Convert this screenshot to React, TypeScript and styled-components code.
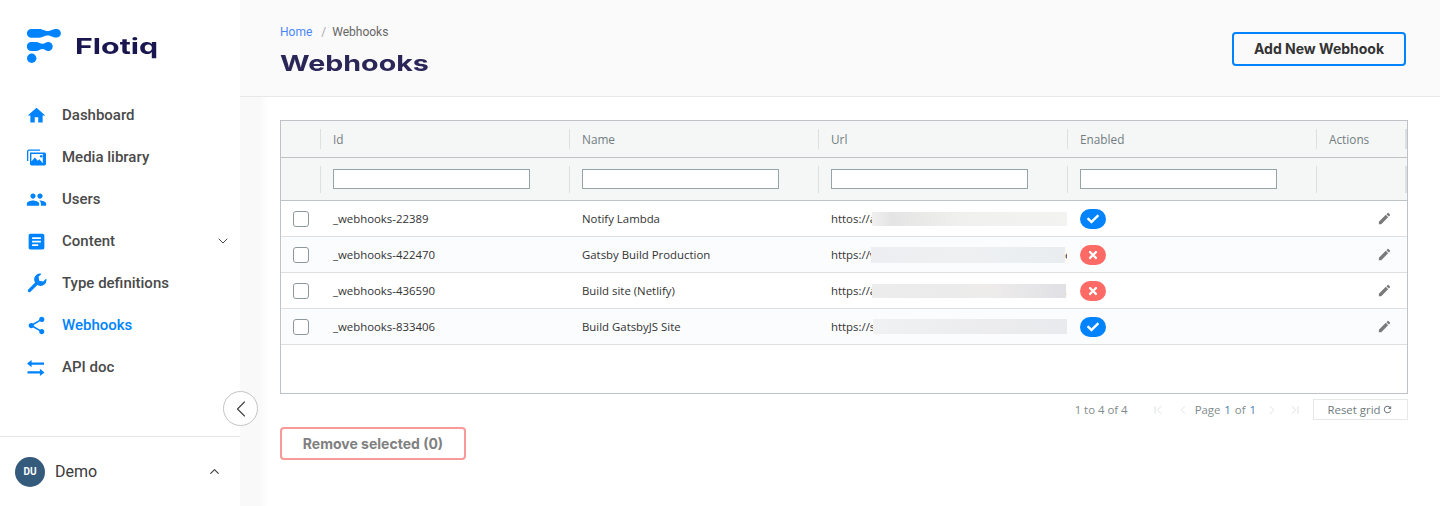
import React from "react";
import styled, { createGlobalStyle } from "styled-components";
import { MdHome, MdPeople, MdArticle, MdShare, MdEdit, MdRefresh } from "react-icons/md";
import { FaCheck, FaTimes } from "react-icons/fa";
import { ChevronDown, ChevronUp, ChevronLeft, ChevronRight, ChevronFirst, ChevronLast } from "lucide-react";

const Global = createGlobalStyle`
  html, body { margin: 0; padding: 0; background: #fff; }
  body { font-family: "Roboto", "Liberation Sans", sans-serif; overflow: hidden; }
  * { box-sizing: border-box; }
`;

const Page = styled.div`
  display: flex;
  width: 1440px;
  height: 506px;
  overflow: hidden;
`;

const Sidebar = styled.aside`
  position: relative;
  width: 240px;
  flex: none;
  display: flex;
  flex-direction: column;
  background: #fff;
`;

const LogoRow = styled.div`
  display: flex;
  align-items: flex-start;
  height: 94px;
  padding: 29px 0 0 27px;
`;

const LogoText = styled.span`
  display: block;
  margin: 4px 0 0 14px;
  font-family: "Inter", sans-serif;
  font-weight: 700;
  font-size: 22px;
  line-height: 27px;
  color: #1a1650;
  transform: scaleX(1.38);
  transform-origin: left center;
`;

const Nav = styled.nav`
  display: flex;
  flex-direction: column;
  flex: 1;
`;

const NavItem = styled.a<{ $active?: boolean }>`
  display: flex;
  align-items: center;
  height: 42px;
  padding-left: 26px;
  font-size: 15px;
  font-weight: 500;
  color: ${(p) => (p.$active ? "#0083fc" : "#4a4a4a")};
  position: relative;
`;

const NavIcon = styled.span`
  display: flex;
  width: 36px;
  color: #0083fc;
  font-size: 21px;
`;

const Caret = styled.span`
  margin-left: auto;
  margin-right: 9px;
  display: flex;
  color: #444;
`;

const Footer = styled.div`
  display: flex;
  align-items: center;
  height: 70px;
  border-top: 1px solid #e6e6e6;
  padding: 0 18px 0 15px;
  font-size: 16px;
  color: #3a3a3a;
`;

const Avatar = styled.span`
  width: 30px;
  height: 30px;
  border-radius: 50%;
  background: #345a7c;
  color: #fff;
  font-size: 10px;
  font-weight: 700;
  display: flex;
  align-items: center;
  justify-content: center;
  margin-right: 10px;
`;

const Collapse = styled.button`
  position: absolute;
  left: 223px;
  top: 391px;
  width: 35px;
  height: 35px;
  border-radius: 50%;
  border: 1px solid #c4c4c4;
  background: #fff;
  padding: 0;
  display: flex;
  align-items: center;
  justify-content: center;
  color: #444;
  z-index: 2;
`;

const Main = styled.main`
  flex: 1;
  display: flex;
  flex-direction: column;
  background: linear-gradient(90deg, #f9f9f9 0, #f9f9f9 20px, #fff 28px);
`;

const Header = styled.header`
  display: flex;
  justify-content: space-between;
  height: 97px;
  padding: 25px 34px 0 40px;
  background: #fafafa;
  border-bottom: 1px solid #e8e8e8;
`;

const Crumbs = styled.div`
  display: flex;
  font-size: 12px;
  line-height: 14px;
  color: #666;
`;

const CrumbLink = styled.span`
  color: #4a86f7;
`;

const CrumbSep = styled.span`
  color: #aaa;
  margin: 0 6px 0 9px;
`;

const Title = styled.h1`
  margin: 9px 0 0;
  font-family: "Inter", sans-serif;
  font-weight: 700;
  font-size: 22px;
  line-height: 30px;
  color: #2a2758;
  transform: scaleX(1.3);
  transform-origin: left center;
`;

const AddButton = styled.button`
  margin-top: 7px;
  width: 174px;
  height: 34px;
  border: 2px solid #0083fc;
  border-radius: 4px;
  background: transparent;
  color: #333;
  font-family: "Inter", sans-serif;
  font-size: 14px;
  font-weight: 700;
  padding: 0 0 2px;
`;

const Content = styled.div`
  padding: 23px 32px 0 40px;
`;

const Grid = styled.div`
  height: 274px;
  border: 1px solid #bdc3c7;
  font-family: "Open Sans", sans-serif;
  font-size: 11.4px;
`;

const Row = styled.div<{ $h: number; $bg: string; $line: string }>`
  display: grid;
  grid-template-columns: 39px 249px 249px 249px 249px 91px;
  align-items: center;
  height: ${(p) => p.$h}px;
  background: ${(p) => p.$bg};
  border-bottom: 1px solid ${(p) => p.$line};
`;

const HeadCell = styled.div<{ $h: number; $end?: boolean }>`
  display: flex;
  align-items: center;
  height: ${(p) => p.$h}px;
  padding: 0 0 1px 12px;
  border-left: 1px solid #dde0e1;
  border-right: ${(p) => (p.$end ? "2px solid #dde0e1" : "none")};
  color: #727d7f;
  font-size: 11.8px;
  font-weight: 500;
`;

const Blank = styled.div``;

const FilterInput = styled.input`
  width: 197px;
  height: 20px;
  border: 1px solid #95a5a6;
  background: #fff;
  padding: 0;
`;

const CheckCell = styled.div`
  display: flex;
  padding-left: 12px;
`;

const Check = styled.span`
  width: 16px;
  height: 16px;
  border: 1px solid #8d989c;
  border-radius: 3px;
  background: #fff;
`;

const Cell = styled.div`
  padding-left: 13px;
  color: #333;
  white-space: nowrap;
  overflow: hidden;
  display: flex;
  align-items: center;
`;

const UrlText = styled.span<{ $w: number }>`
  display: block;
  width: ${(p) => p.$w}px;
  overflow: hidden;
  flex: none;
`;

const Blur = styled.span<{ $w: number; $h: number; $tone: string }>`
  display: block;
  flex: none;
  width: ${(p) => p.$w}px;
  height: ${(p) => p.$h}px;
  background: ${(p) => p.$tone};
  filter: blur(0.5px);
`;

const Tail = styled.span`
  width: 3px;
  overflow: hidden;
  line-height: 1;
  color: #333;
`;

const Pill = styled.span<{ $on: boolean }>`
  width: 26px;
  height: 20px;
  border-radius: 10px;
  background: ${(p) => (p.$on ? "#0083fc" : "#fe6a65")};
  color: #fff;
  display: flex;
  align-items: center;
  justify-content: center;
  font-size: 12px;
`;

const ActionCell = styled.div`
  display: flex;
  justify-content: flex-end;
  padding-right: 15px;
  color: #7a7a7a;
  font-size: 15px;
`;

const Pager = styled.div`
  display: flex;
  align-items: center;
  height: 21px;
  margin-top: 5px;
  font-family: "Open Sans", sans-serif;
  font-size: 11.4px;
  color: #7f8c8d;
`;

const Count = styled.span`
  margin-left: auto;
  margin-right: 20px;
`;

const PageIcon = styled.span<{ $mr: number }>`
  display: flex;
  width: 20px;
  margin-right: ${(p) => p.$mr}px;
  justify-content: center;
  color: #d0d5d6;
`;

const PageLabel = styled.span`
  margin-right: 6px;
  word-spacing: 1px;
`;

const PageNum = styled.span`
  color: #4b7fb5;
`;

const ResetButton = styled.button`
  margin-left: 8px;
  width: 95px;
  height: 21px;
  border: 1px solid #e6e8e8;
  background: #fff;
  color: #6f7b7d;
  font-family: "Open Sans", sans-serif;
  font-size: 11.4px;
  padding: 0;
  display: flex;
  align-items: center;
  justify-content: center;
  gap: 2px;
`;

const RemoveButton = styled.button`
  display: block;
  margin-top: 7px;
  width: 186px;
  height: 33px;
  border: 2px solid #f79a98;
  border-radius: 4px;
  background: #fff;
  color: #808080;
  font-family: "Inter", sans-serif;
  font-size: 14px;
  font-weight: 700;
  padding: 0 0 1px;
`;

const Logo = () => (
  <svg width="34" height="34" viewBox="0 0 34 34" fill="#0083fc" style={{ flex: "none" }}>
    <path d="M4.3 0H12C16 0 17 2 21 2C24 2 25 0 29.6 0A4.3 4.3 0 0 1 29.6 8.6C25 8.6 24 6.6 21 6.6C17 6.6 16 8.8 12 8.8H4.3A4.4 4.4 0 0 1 4.3 0Z" />
    <path d="M4.3 13H9C12 13 13 14.8 15.5 14.8C18 14.8 18.5 13 21.2 13A4.5 4.5 0 0 1 21.2 22C18.5 22 18 20 15.5 20C13 20 12 22 9 22H4.3A4.5 4.5 0 0 1 4.3 13Z" />
    <circle cx="4.7" cy="29.2" r="4.7" />
  </svg>
);

const MediaIcon = () => (
  <svg width="19" height="17" viewBox="0 0 19 17" fill="#0083fc" style={{ marginLeft: 1 }}>
    <path d="M0 2.5C0 1.2.9.4 2 .4h11v1.4H2c-.4 0-.7.3-.7.7V12H0Z" />
    <path fillRule="evenodd" d="M3 3.6h14.4c.9 0 1.6.7 1.6 1.6v9.6c0 .9-.7 1.6-1.6 1.6H4.6c-.9 0-1.6-.7-1.6-1.6Zm1.4 1.4v7.6l3.4-4.2 3 3.4 1.6-1.6 3.4 4V5Z" />
    <circle cx="14.2" cy="7.2" r="1.3" />
  </svg>
);

const WrenchIcon = () => (
  <svg width="20" height="20" viewBox="0 0 20 20" fill="#0083fc" style={{ marginLeft: 1 }}>
    <line x1="2.4" y1="17.6" x2="10" y2="10" stroke="#0083fc" strokeWidth="3.2" strokeLinecap="round" />
    <path d="M14.6 .8 11.6 3.8 12.2 7.8 16.2 8.4 19.2 5.4A5.8 5.8 0 0 1 11 12.2L7.8 9A5.8 5.8 0 0 1 14.6 .8Z" />
  </svg>
);

const SwapIcon = () => (
  <svg width="18" height="16" viewBox="0 0 18 16" fill="#0083fc" style={{ marginLeft: 1, marginTop: 2 }}>
    <path d="M0 3.6 4.6 0V2.4H17V4.8H4.6V7.2Z" />
    <path d="M17.5 12.4 12.9 8.8V11.2H.5V13.6H12.9V16Z" />
  </svg>
);

const navItems: { label: string; icon: React.ReactNode; active?: boolean; caret?: boolean }[] = [
  { label: "Dashboard", icon: <MdHome /> },
  { label: "Media library", icon: <MediaIcon /> },
  { label: "Users", icon: <MdPeople /> },
  { label: "Content", icon: <MdArticle />, caret: true },
  { label: "Type definitions", icon: <WrenchIcon /> },
  { label: "Webhooks", icon: <MdShare />, active: true },
  { label: "API doc", icon: <SwapIcon /> },
];

const rows = [
  { id: "_webhooks-22389", name: "Notify Lambda", url: "httos://a", w: 41, bw: 197, bh: 14, on: true, tail: "", tone: "linear-gradient(90deg,#f0f0f0,#e4e4e4 10%,#f0f0ee 45%,#f3f3f1 100%)" },
  { id: "_webhooks-422470", name: "Gatsby Build Production", url: "https://v", w: 40, bw: 194, bh: 16, on: false, tail: "e", tone: "linear-gradient(90deg,#eceef1,#eef0f2 50%,#e9edf0)" },
  { id: "_webhooks-436590", name: "Build site (Netlify)", url: "https://a", w: 41, bw: 194, bh: 14, on: false, tail: ".", tone: "linear-gradient(90deg,#ececec,#ebebeb 40%,#eeeceb 60%,#e0e0e5)" },
  { id: "_webhooks-833406", name: "Build GatsbyJS Site", url: "https://s", w: 42, bw: 195, bh: 15, on: true, tail: "", tone: "linear-gradient(90deg,#f0f1f3,#ececef 60%,#e9eaed)" },
];

export default function App() {
  return (
    <Page>
      <Global />
      <Sidebar>
        <LogoRow>
          <Logo />
          <LogoText>Flotiq</LogoText>
        </LogoRow>
        <Nav>
          {navItems.map((n) => (
            <NavItem key={n.label} $active={n.active}>
              <NavIcon>{n.icon}</NavIcon>
              {n.label}
              {n.caret && (
                <Caret>
                  <ChevronDown size={16} strokeWidth={1.5} />
                </Caret>
              )}
            </NavItem>
          ))}
        </Nav>
        <Footer>
          <Avatar>DU</Avatar>
          Demo
          <Caret style={{ marginRight: 0 }}>
            <ChevronUp size={15} strokeWidth={2} />
          </Caret>
        </Footer>
        <Collapse>
          <ChevronLeft size={28} strokeWidth={1} />
        </Collapse>
      </Sidebar>
      <Main>
        <Header>
          <div>
            <Crumbs>
              <CrumbLink>Home</CrumbLink>
              <CrumbSep>/</CrumbSep>
              Webhooks
            </Crumbs>
            <Title>Webhooks</Title>
          </div>
          <AddButton>Add New Webhook</AddButton>
        </Header>
        <Content>
          <Grid>
            <Row $h={37} $bg="#f5f7f7" $line="#bdc3c7">
              <Blank />
              <HeadCell $h={20}>Id</HeadCell>
              <HeadCell $h={20}>Name</HeadCell>
              <HeadCell $h={20}>Url</HeadCell>
              <HeadCell $h={20}>Enabled</HeadCell>
              <HeadCell $h={20} $end>Actions</HeadCell>
            </Row>
            <Row $h={43} $bg="#f5f7f7" $line="#bdc3c7">
              <Blank />
              <HeadCell $h={27}><FilterInput /></HeadCell>
              <HeadCell $h={27}><FilterInput /></HeadCell>
              <HeadCell $h={27}><FilterInput /></HeadCell>
              <HeadCell $h={27}><FilterInput /></HeadCell>
              <HeadCell $h={27} $end />
            </Row>
            {rows.map((r, i) => (
              <Row key={r.id} $h={36} $bg={i % 2 ? "#fbfcfe" : "#fff"} $line="#dde0e1">
                <CheckCell><Check /></CheckCell>
                <Cell>{r.id}</Cell>
                <Cell>{r.name}</Cell>
                <Cell>
                  <UrlText $w={r.w}>{r.url}</UrlText>
                  <Blur $w={r.bw} $h={r.bh} $tone={r.tone} />
                  {r.tail && <Tail>{r.tail}</Tail>}
                </Cell>
                <Cell>
                  <Pill $on={r.on}>{r.on ? <FaCheck /> : <FaTimes />}</Pill>
                </Cell>
                <ActionCell><MdEdit /></ActionCell>
              </Row>
            ))}
          </Grid>
          <Pager>
            <Count>1 to 4 of 4</Count>
            <PageIcon $mr={5}><ChevronFirst size={14} strokeWidth={1.2} /></PageIcon>
            <PageIcon $mr={2}><ChevronLeft size={14} strokeWidth={1.2} /></PageIcon>
            <PageLabel>Page <PageNum>1</PageNum> of <PageNum>1</PageNum></PageLabel>
            <PageIcon $mr={3}><ChevronRight size={14} strokeWidth={1.2} /></PageIcon>
            <PageIcon $mr={0}><ChevronLast size={14} strokeWidth={1.2} /></PageIcon>
            <ResetButton>Reset grid <MdRefresh size={11} /></ResetButton>
          </Pager>
          <RemoveButton>Remove selected (0)</RemoveButton>
        </Content>
      </Main>
    </Page>
  );
}
